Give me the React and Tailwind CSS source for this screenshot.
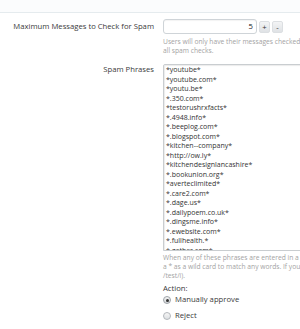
export default function App() {
  const phrases = [
    "*youtube*",
    "*youtube.com*",
    "*youtu.be*",
    "*.350.com*",
    "*testorushrxfacts*",
    "*.4948.info*",
    "*.beeplog.com*",
    "*.blogspot.com*",
    "*kitchen--company*",
    "*http://ow.ly*",
    "*kitchendesignlancashire*",
    "*.bookunion.org*",
    "*averteclimited*",
    "*.care2.com*",
    "*.dage.us*",
    "*.dailypoem.co.uk*",
    "*.dingsme.info*",
    "*.ewebsite.com*",
    "*.fullhealth.*",
    "*.gather.com*",
  ];
  return (
    <div className="w-[300px] h-[329px] overflow-hidden bg-white font-['Open_Sans',sans-serif] text-[#3a3a3a]">
      <div className="h-[13px] bg-[#fbfcfd] border-b border-[#e5ebee]" />
      <div className="flex w-[560px] pt-[6px]">
        <div className="w-[163px] shrink-0 pr-[9px] text-right text-[7.7px] leading-[15px] whitespace-nowrap">
          Maximum Messages to Check for Spam
        </div>
        <div className="flex-1">
          <div className="flex items-center gap-[2px]">
            <div className="w-[94px] h-[15px] border border-[#cfd4d8] rounded-[3px] bg-white text-right pr-[3px] text-[7.7px] leading-[13px] text-[#222] shadow-[inset_0_1px_1px_rgba(0,0,0,0.05)]">
              5
            </div>
            <div className="w-[11px] h-[12px] rounded-[2px] border border-[#dcdfe2] bg-gradient-to-b from-[#f3f4f5] to-[#dfe2e5] text-[7.7px] leading-[10px] text-center text-[#333]">
              +
            </div>
            <div className="w-[11px] h-[12px] rounded-[2px] border border-[#dcdfe2] bg-gradient-to-b from-[#f3f4f5] to-[#dfe2e5] text-[7.7px] leading-[10px] text-center text-[#333]">
              -
            </div>
          </div>
          <div className="mt-[3px] text-[6.7px] leading-[9px] text-[#a3a3a3] whitespace-nowrap">
            <div>Users will only have their messages checked until they have posted this many messages. Use 0 to always apply</div>
            <div>all spam checks.</div>
          </div>
        </div>
      </div>
      <div className="flex w-[560px] mt-[9px]">
        <div className="w-[163px] shrink-0 pr-[9px] pt-[1px] text-right text-[7.7px] leading-[9.5px] whitespace-nowrap">
          Spam Phrases
        </div>
        <div className="flex-1">
          <div className="w-[220px] h-[187px] overflow-hidden border border-[#c9cdd0] rounded-tl-[2px] bg-white pl-[2px] text-[7px] leading-[9.5px] text-[#333] shadow-[inset_1px_1px_1px_rgba(0,0,0,0.08)] whitespace-nowrap">
            {phrases.map((p) => (
              <div key={p}>{p}</div>
            ))}
          </div>
          <div className="mt-[2px] text-[6.7px] leading-[9px] text-[#a3a3a3] whitespace-nowrap">
            <div>When any of these phrases are entered in a message, the selected action will be taken. Use</div>
            <div>a * as a wild card to match any words. If you want to use regular expressions, use the form (for example,</div>
            <div>/test/i).</div>
          </div>
          <div className="mt-[3px] text-[7.7px] leading-[10px] text-[#3a3a3a]">Action:</div>
          <div className="flex items-center gap-[4px] h-[14px] text-[7.7px] text-[#3a3a3a]">
            <div className="w-[8px] h-[8px] rounded-full border border-[#9ea3a8] bg-gradient-to-b from-[#f4f4f4] to-[#d5d8db] flex items-center justify-center">
              <div className="w-[3px] h-[3px] rounded-full bg-[#333]" />
            </div>
            <span>Manually approve</span>
          </div>
          <div className="mt-[2px] flex items-center gap-[4px] h-[14px] text-[7.7px] text-[#3a3a3a]">
            <div className="w-[8px] h-[8px] rounded-full border border-[#b3b7bb] bg-gradient-to-b from-[#f7f7f7] to-[#dcdfe2]" />
            <span>Reject</span>
          </div>
        </div>
      </div>
    </div>
  );
}
